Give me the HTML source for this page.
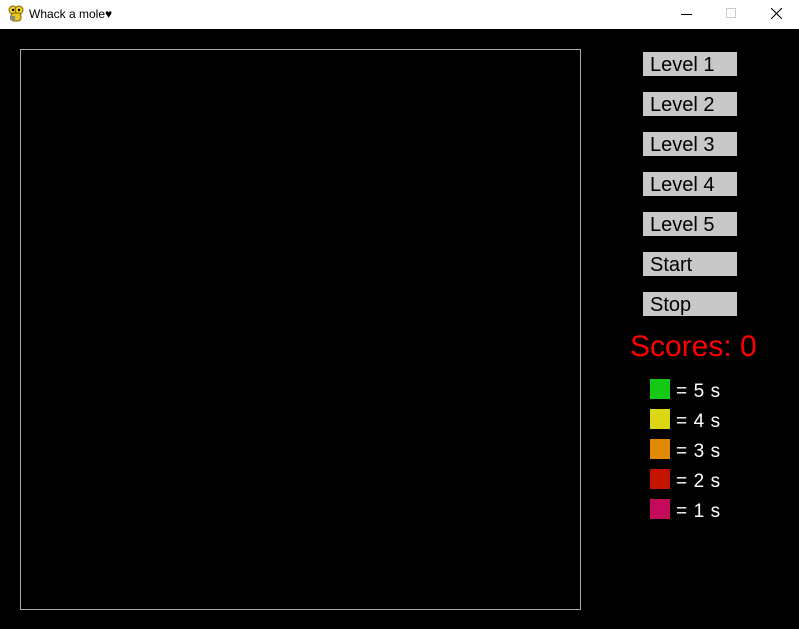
<!DOCTYPE html>
<html><head><meta charset="utf-8"><style>
*{margin:0;padding:0;box-sizing:border-box}
body{width:799px;height:629px;background:#000;position:relative;overflow:hidden;font-family:"Liberation Sans",Arial,sans-serif}
.tb{position:absolute;left:0;top:0;width:799px;height:29px;background:#fff}
.tt{position:absolute;left:29px;top:7px;font-size:12px;color:#000;font-family:"Liberation Sans","DejaVu Sans",sans-serif}
.btn{position:absolute;left:643px;width:94px;height:24px;background:#c8c8c8;color:#000;font-size:20px;line-height:26px;padding-left:7px}
.sq{position:absolute;left:650px;width:20px;height:20px}
.lb{position:absolute;left:676px;color:#fff;font-size:19px;line-height:20px;letter-spacing:0.6px}
</style></head><body>
<div class="tb">
<svg style="position:absolute;left:8px;top:5px" width="16" height="18" viewBox="0 0 16 18"><circle cx="5" cy="5" r="4" fill="#f0d020" stroke="#806000"/><circle cx="11" cy="5" r="4" fill="#f0d020" stroke="#806000"/><rect x="3" y="8" width="10" height="8" rx="3" fill="#e8c820" stroke="#806000"/><rect x="2" y="11" width="5" height="4" fill="#888"/><circle cx="5" cy="5" r="1.2" fill="#000"/><circle cx="11" cy="5" r="1.2" fill="#000"/></svg>
<div class="tt">Whack a mole♥</div>
<div style="position:absolute;left:681px;top:14px;width:11px;height:1px;background:#000"></div>
<div style="position:absolute;left:726px;top:8px;width:10px;height:10px;border:1px solid #ccc"></div>
<svg style="position:absolute;left:771px;top:8px" width="11" height="11"><path d="M0 0L11 11M11 0L0 11" stroke="#000" stroke-width="1.1"/></svg>
</div>
<div style="position:absolute;left:20px;top:49px;width:561px;height:561px;border:1px solid #aaa"></div>
<div class="btn" style="top:52px">Level 1</div>
<div class="btn" style="top:92px">Level 2</div>
<div class="btn" style="top:132px">Level 3</div>
<div class="btn" style="top:172px">Level 4</div>
<div class="btn" style="top:212px">Level 5</div>
<div class="btn" style="top:252px">Start</div>
<div class="btn" style="top:292px">Stop</div>
<div style="position:absolute;left:630px;top:330px;color:#f00;font-size:30px;line-height:34px">Scores: 0</div>
<div class="sq" style="top:379px;background:#14c814"></div><div class="lb" style="top:382px">= 5 s</div>
<div class="sq" style="top:409px;background:#dcd614"></div><div class="lb" style="top:412px">= 4 s</div>
<div class="sq" style="top:439px;background:#e08a08"></div><div class="lb" style="top:442px">= 3 s</div>
<div class="sq" style="top:469px;background:#c41400"></div><div class="lb" style="top:472px">= 2 s</div>
<div class="sq" style="top:499px;background:#c40a5a"></div><div class="lb" style="top:502px">= 1 s</div>
</body></html>
